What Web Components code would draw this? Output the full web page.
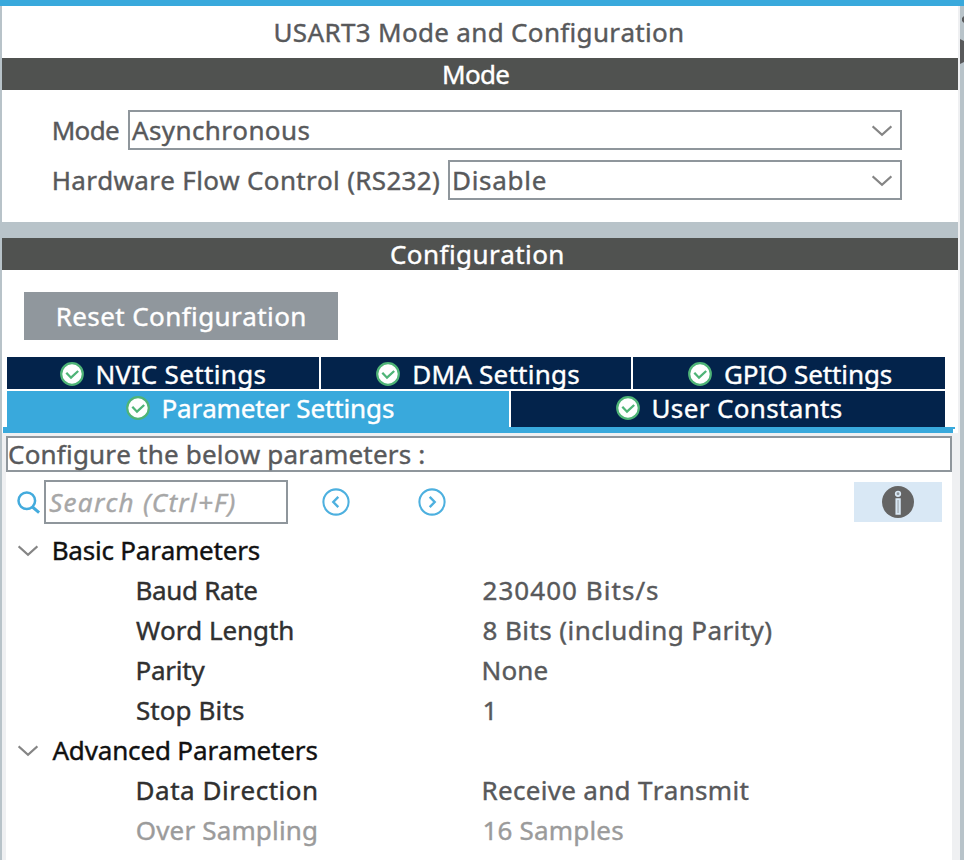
<!DOCTYPE html>
<html lang="en">
<head>
<meta charset="utf-8">
<title>USART3 Mode and Configuration</title>
<style>
html,body{margin:0;padding:0;height:860px;overflow:hidden;background:#fff}
body{font-family:"Noto Sans","Open Sans",sans-serif;font-size:26px;line-height:32px;color:#58595b}
</style>
</head>
<body>
<usart-window></usart-window>
<script>
const define = (name, html, setup) => {
  const t = document.createElement('template');
  t.innerHTML = html;
  customElements.define(name, class extends HTMLElement {
    constructor() { super(); this.attachShadow({mode: 'open'}).append(t.content.cloneNode(true)); }
    connectedCallback() { if (setup) setup(this, this.shadowRoot); }
  });
};

// Text label whose tracking is adjusted so that its ink is "w" pixels wide.
const ctx = document.createElement('canvas').getContext('2d');
define('ui-text', `<style>
:host{display:block;flex:none;white-space:pre;font-kerning:none;font-variant-ligatures:none;-webkit-text-stroke:.4px currentColor}
span{display:inline-block}
</style><span></span>`, (el, root) => {
  const span = root.querySelector('span'), text = el.getAttribute('text');
  const w = parseFloat(el.getAttribute('w'));
  span.textContent = text;
  const cs = getComputedStyle(span);
  ctx.font = `${cs.fontStyle} 400 ${cs.fontSize} ${cs.fontFamily}`;
  ctx.fontKerning = 'none';
  const m = ctx.measureText(text);
  const ink = m.actualBoundingBoxLeft + m.actualBoundingBoxRight;
  if (text.length > 1) span.style.letterSpacing = ((w - ink) / (text.length - 1)).toFixed(3) + 'px';
  span.style.marginLeft = m.actualBoundingBoxLeft + 'px';
  el.style.width = w + 'px';
});

define('ui-chevron', `<style>:host{display:block;flex:none;width:20px;height:12px}svg{display:block}</style>
<svg width="20" height="12" viewBox="0 0 20 12" fill="none" stroke="#858585" stroke-width="2.2"><path d="M.6 1.3 10 9.8 19.4 1.3"/></svg>`);

define('ui-check', `<style>:host{display:block;flex:none;width:24px;height:24px}svg{display:block}</style>
<svg width="24" height="24" viewBox="0 0 24 24"><circle cx="12" cy="12" r="10.8" fill="#fff" stroke="#4fb477" stroke-width="2.2"/><path d="M6.3 10.8 11 15.7 18.2 9" fill="none" stroke="#4fb477" stroke-width="2.3"/></svg>`);

define('section-bar', `<style>:host{display:flex;justify-content:flex-start;height:32px;background:#505250;color:#fff}</style><slot></slot>`);

define('combo-row', `<style>
:host{display:flex;align-items:center;height:40px}
.box{box-sizing:border-box;flex:1;height:40px;border:2px solid #8f969c;display:flex;align-items:center;justify-content:space-between;padding:0 8px 0 var(--inset,2px);margin-left:9px}
ui-chevron{margin-top:1px}
</style><slot name="label"></slot><div class="box"><slot></slot><ui-chevron></ui-chevron></div>`);

define('tab-item', `<style>
:host{display:flex;flex:none;box-sizing:border-box;align-items:center;background:#03234b;color:#fff;height:100%}
:host([active]){background:#39a9dc}
ui-check{margin-right:var(--gap,13.5px)}
</style><ui-check></ui-check><slot></slot>`);

define('param-group', `<style>
:host{display:block}
.head{display:flex;align-items:center;height:40px;padding-left:12px;color:#111}
ui-chevron{margin-right:var(--gap,15.7px);margin-top:2px}
</style><div class="head"><ui-chevron></ui-chevron><slot name="title"></slot></div><slot></slot>`);

define('param-row', `<style>
:host{display:grid;grid-template-columns:346px 1fr;align-items:center;height:40px;padding-left:131.5px}
::slotted([slot=name]){color:#303030}
:host([disabled]) ::slotted(*){color:#9b9b9b}
</style><slot name="name"></slot><slot></slot>`);

define('nav-button', `<style>:host{display:block;flex:none;width:28px;height:28px}:host([next]) svg{transform:scaleX(-1)}svg{display:block}</style>
<svg width="28" height="28" viewBox="0 0 28 28" fill="none" stroke="#4db0df"><circle cx="14" cy="14" r="12.6" stroke-width="2.1"/><path d="M16.3 8.8 11.3 14l5 5.2" stroke-width="2.4"/></svg>`);

define('search-bar', `<style>
:host{display:flex;align-items:center;height:44px;padding:0 10px 0 11px}
.field{box-sizing:border-box;width:244px;height:44px;border:2px solid #8f969c;display:flex;align-items:center;padding-left:3.2px;color:#a7a7a7;font-style:italic;margin-left:3px}
.prev{margin-left:34px}.next{margin-left:68px}
.info{margin-left:auto;width:88px;height:40px;background:#d9e8f5;display:flex;align-items:center;justify-content:center}
svg{display:block}
</style>
<svg width="24" height="26" viewBox="0 0 24 26" fill="none" stroke="#43abdd"><circle cx="9.8" cy="11.7" r="8.3" stroke-width="2.5"/><path d="m15.5 18 6.6 5.7" stroke-width="3"/></svg>
<div class="field"><ui-text text="Search (Ctrl+F)" w="185.6"></ui-text></div>
<nav-button class="prev"></nav-button><nav-button class="next" next></nav-button>
<div class="info"><svg width="32" height="32" viewBox="0 0 32 32"><circle cx="16" cy="16" r="16" fill="#646464"/><g fill="#8f969c" stroke="#d9e8f5" stroke-width="1.7"><circle cx="16" cy="7.8" r="2.3"/><path fill="#b4bfc8" d="M14.3 13.1h3.6v14.8h-3.6z"/></g></svg></div>`);

define('usart-window', `<style>
:host{display:flex;flex-direction:column;width:964px;height:860px;overflow:hidden;background:#b8c3c9}
.top{height:6px;background:#39a9dc;flex:none}
.main{flex:1;display:flex;padding-left:2px;min-height:0}
.panel{width:956px;display:flex;flex-direction:column;background:#fff}
.edge{width:2px;background:#eff0f2}
.side{width:4px}.side svg{display:block}
.title{height:52px;display:flex;align-items:center;padding-left:273.5px}
.mode{height:132px;box-sizing:border-box;padding:20px 56px 0 51.7px;display:flex;flex-direction:column;gap:10px}
.split{height:16px;background:#b8c3c9}
.config{padding:22px 0 0 5px;height:157px;box-sizing:border-box}
.reset{margin-left:17px;width:314px;height:48px;box-sizing:border-box;padding-left:33.7px;background:#90979d;color:#fff;display:flex;align-items:center}
.tabs{display:flex;gap:2px}
.t1{height:32px;margin-top:17px;margin-bottom:2px}
.t1 tab-item{padding-top:1px}
.t1 ui-text{margin-top:1px}
.t2{height:36px}.t2 tab-item{padding-bottom:2px}
.line{height:6px;margin:0 3px 0 1px;background:#39a9dc;clip-path:polygon(0 0,100% 0,100% 2px,calc(100% - 2px) 2px,calc(100% - 2px) 100%,0 100%);flex:none}
.body{flex:1;background:#eff0f2;padding:3px 6px 0 4px;min-height:0}
.sheet{background:#fff;height:100%}
.desc{height:36px;box-sizing:border-box;border:2px solid #8f969c;display:flex;align-items:center;padding-left:1px;margin-bottom:8px}
param-group:first-of-type{margin-top:6px}
</style>
<div class="top"></div>
<div class="main">
<div class="panel">
  <div class="title"><ui-text text="USART3 Mode and Configuration" w="406.6"></ui-text></div>
  <section-bar style="padding-left:442px"><ui-text text="Mode" w="65.3"></ui-text></section-bar>
  <div class="mode">
    <combo-row><ui-text slot="label" text="Mode" w="65.3"></ui-text><ui-text text="Asynchronous" w="177.4"></ui-text></combo-row>
    <combo-row style="--inset:4px"><ui-text slot="label" text="Hardware Flow Control (RS232)" w="385.3"></ui-text><ui-text text="Disable" w="91.7"></ui-text></combo-row>
  </div>
  <div class="split"></div>
  <section-bar style="padding-left:389px"><ui-text text="Configuration" w="171.3"></ui-text></section-bar>
  <div class="config">
    <div class="reset"><ui-text text="Reset Configuration" w="246.6"></ui-text></div>
    <div class="tabs t1">
      <tab-item style="width:312px;padding-left:53px"><ui-text text="NVIC Settings" w="168"></ui-text></tab-item>
      <tab-item style="width:310px;padding-left:55px;--gap:14.2px"><ui-text text="DMA Settings" w="165"></ui-text></tab-item>
      <tab-item style="width:312px;padding-left:55px;--gap:13px"><ui-text text="GPIO Settings" w="166.8"></ui-text></tab-item>
    </div>
    <div class="tabs t2">
      <tab-item active style="width:502px;padding-left:119px"><ui-text text="Parameter Settings" w="230.4"></ui-text></tab-item>
      <tab-item style="width:434px;padding-left:105px"><ui-text text="User Constants" w="188.3"></ui-text></tab-item>
    </div>
  </div>
  <div class="line"></div>
  <div class="body"><div class="sheet">
    <div class="desc"><ui-text text="Configure the below parameters :" w="415.3"></ui-text></div>
    <search-bar></search-bar>
    <param-group>
      <ui-text slot="title" text="Basic Parameters" w="206"></ui-text>
      <param-row><ui-text slot="name" text="Baud Rate" w="119.8"></ui-text><ui-text text="230400 Bits/s" w="174.6"></ui-text></param-row>
      <param-row><ui-text slot="name" text="Word Length" w="156.2" style="margin-left:-1.5px"></ui-text><ui-text text="8 Bits (including Parity)" w="287.7"></ui-text></param-row>
      <param-row><ui-text slot="name" text="Parity" w="68"></ui-text><ui-text text="None" w="64"></ui-text></param-row>
      <param-row><ui-text slot="name" text="Stop Bits" w="107" style="margin-left:-.6px"></ui-text><ui-text text="1" w="11.7" style="margin-left:1px"></ui-text></param-row>
    </param-group>
    <param-group style="--gap:14.4px">
      <ui-text slot="title" text="Advanced Parameters" w="265"></ui-text>
      <param-row><ui-text slot="name" text="Data Direction" w="178.6"></ui-text><ui-text text="Receive and Transmit" w="265"></ui-text></param-row>
      <param-row disabled><ui-text slot="name" text="Over Sampling" w="179.3" style="margin-left:-.8px"></ui-text><ui-text text="16 Samples" w="138.7" style="margin-left:1px"></ui-text></param-row>
    </param-group>
  </div></div>
</div>
<div class="edge"></div>
<div class="side"><svg width="4" height="70" viewBox="0 0 4 70"><path d="M4 10 2 12v3l2 2zM0 33l4 2v21l-4 2z" fill="#58595b"/></svg></div>
</div>`);
</script>
</body>
</html>
